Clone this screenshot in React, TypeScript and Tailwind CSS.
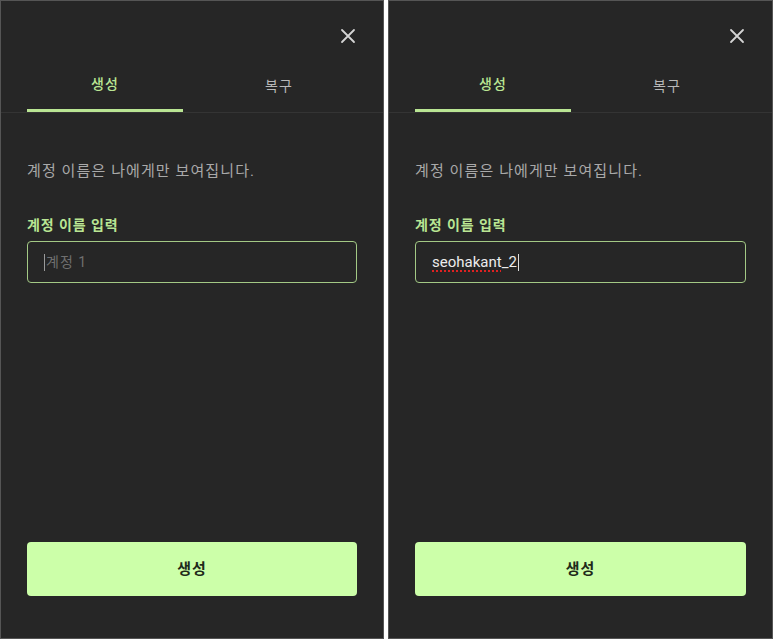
import React from "react";

const font = { fontFamily: "Roboto, 'Noto Sans CJK KR', 'Noto Sans', sans-serif" };

function CloseIcon() {
  return (
    <svg width="16" height="16" viewBox="0 0 16 16" fill="none" stroke="#d4d4d4" strokeWidth="1.8" strokeLinecap="round">
      <path d="M2 2L14 14M14 2L2 14" />
    </svg>
  );
}

function Panel({ filled }: { filled?: boolean }) {
  return (
    <div className="flex h-[639px] flex-col border border-[#555] bg-[#262626]">
      <div className="flex h-[59px] items-center justify-end pr-[25px] pt-[10px]">
        <button className="grid size-5 place-items-center">
          <CloseIcon />
        </button>
      </div>

      <div className="flex gap-[18px] border-b border-[#343434] px-[26px]">
        <button className="h-[52px] w-[156px] border-b-[3px] border-[#b9e593] text-[14px] font-medium tracking-[1px] text-[#b9e593]">생성</button>
        <button className="h-[52px] w-[156px] text-[14px] tracking-[1px] text-[#b8b8b8]">복구</button>
      </div>

      <div className="flex flex-1 flex-col px-[26px] pb-[42px]">
        <p className="mt-[48px] text-[15px] leading-5 tracking-[1.1px] text-[#a9a9a9]">계정 이름은 나에게만 보여집니다.</p>
        <label className="mt-[34px] text-[14px] font-bold leading-5 tracking-[0.9px] text-[#b9e593]">계정 이름 입력</label>
        <div className="mt-[6px] flex h-[42px] items-center rounded-[4px] border border-[#a3c985] px-4">
          {filled ? (
            <span className="flex items-center text-[15px] text-[#ececec]">
              <span className="underline decoration-[#d22] decoration-dotted decoration-[1.5px] underline-offset-[4px]">seohakant</span>
              <span>_2</span>
              <span className="ml-px h-[17px] w-px bg-[#ddd]" />
            </span>
          ) : (
            <span className="flex items-center text-[14px] tracking-[1px] text-[#6f6f6f]">
              <span className="mr-px h-[17px] w-px bg-[#9a9a9a]" />
              계정 1
            </span>
          )}
        </div>

        <div className="flex-1" />

        <button className="h-[54px] rounded-[4px] bg-[#ccffa9] text-[15px] font-semibold tracking-[1px] text-[#1f2a1a]">생성</button>
      </div>
    </div>
  );
}

export default function App() {
  return (
    <div className="flex h-[639px] w-[773px] gap-[4px] bg-white" style={font}>
      <div className="w-[384px]">
        <Panel />
      </div>
      <div className="flex-1">
        <Panel filled />
      </div>
    </div>
  );
}
